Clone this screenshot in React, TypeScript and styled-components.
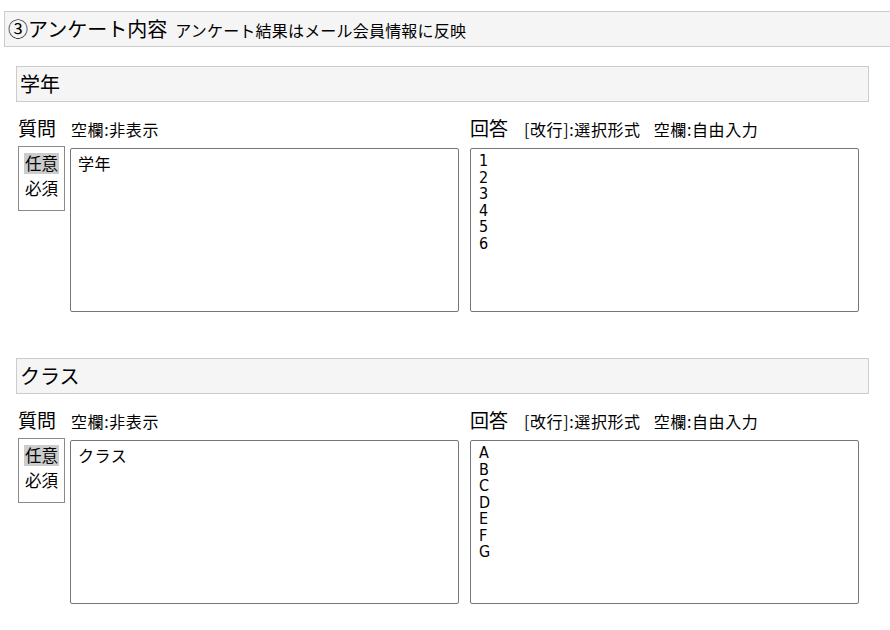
import React from 'react';
import styled, { createGlobalStyle, css } from 'styled-components';

const jp = `"Noto Sans CJK JP", "Noto Sans", sans-serif`;

const GlobalStyle = createGlobalStyle`
  html, body {
    margin: 0;
    padding: 0;
    background: #fff;
    overflow: hidden;
  }
  body {
    font-family: ${jp};
    color: #000;
  }
`;

const barCss = css`
  box-sizing: border-box;
  height: 36px;
  background: #f5f5f5;
  border: 1px solid #cccccc;
  display: flex;
  align-items: center;
  white-space: nowrap;
`;

const Page = styled.div`
  padding-top: 11px;
  width: 890px;
`;

const Header = styled.div`
  ${barCss}
  margin-left: 4px;
  width: 900px;
  padding-left: 3px;
  gap: 8px;
  align-items: baseline;
  padding-top: 2px;
`;

const HeaderTitle = styled.span`
  font-size: 20px;
  line-height: 30px;
`;

const HeaderNote = styled.span`
  font-size: 16px;
  line-height: 30px;
  letter-spacing: 0.2px;
`;

const Sections = styled.div`
  padding: 19px 21px 0 16px;
`;

const Section = styled.section`
  margin-bottom: 46px;
`;

const SectionTitle = styled.div`
  ${barCss}
  padding-left: 3px;
  font-size: 20px;
  line-height: 30px;
`;

const Row = styled.div`
  display: flex;
  gap: 11px;
  padding-left: 2px;
  margin-top: 14px;
`;

const Column = styled.div<{ width: number }>`
  width: ${({ width }) => width}px;
  display: flex;
  flex-direction: column;
`;

const LabelRow = styled.div<{ gap: number }>`
  height: 30px;
  display: flex;
  align-items: baseline;
  gap: ${({ gap }) => gap}px;
  white-space: nowrap;
`;

const Label = styled.span`
  font-size: 19px;
  line-height: 24px;
`;

const Note = styled.span<{ spaced?: boolean }>`
  font-size: 16px;
  line-height: 24px;
  letter-spacing: 0.6px;
  margin-left: ${({ spaced }) => (spaced ? '3px' : '0')};
`;

const Body = styled.div`
  display: flex;
  align-items: flex-start;
  gap: 5px;
`;

const RadioBox = styled.div`
  box-sizing: border-box;
  width: 47px;
  height: 65px;
  border: 1px solid #8a8a8a;
  display: flex;
  flex-direction: column;
  align-items: center;
  padding-top: 6px;
  gap: 4px;
`;

const RadioItem = styled.span<{ selected?: boolean }>`
  font-size: 16.5px;
  line-height: 21px;
  padding: 0 1px;
  background: ${({ selected }) => (selected ? '#cccccc' : 'transparent')};
`;

const Field = styled.textarea<{ list?: boolean }>`
  box-sizing: border-box;
  width: 389px;
  height: 164px;
  margin: 2px 0 0;
  border: 1px solid #767676;
  border-radius: 2px;
  resize: none;
  overflow: hidden;
  outline: none;
  color: #000;
  background: #fff;
  ${({ list }) =>
    list
      ? css`
          padding: 4px 8px;
          font-family: "Liberation Sans Narrow", "DejaVu Sans Condensed", "Liberation Sans", sans-serif;
          font-stretch: condensed;
          font-weight: 300;
          font-size: 16px;
          line-height: 16.5px;
        `
      : css`
          padding: 2px 7px;
          font-family: ${jp};
          font-size: 16px;
          line-height: 24px;
          letter-spacing: 0.5px;
        `}
`;

interface Question {
  title: string;
  question: string;
  answers: string[];
}

const questions: Question[] = [
  { title: '学年', question: '学年', answers: ['1', '2', '3', '4', '5', '6'] },
  { title: 'クラス', question: 'クラス', answers: ['A', 'B', 'C', 'D', 'E', 'F', 'G'] },
];

const QuestionBlock: React.FC<{ item: Question }> = ({ item }) => (
  <Section>
    <SectionTitle>{item.title}</SectionTitle>
    <Row>
      <Column width={441}>
        <LabelRow gap={15}>
          <Label>質問</Label>
          <Note>空欄:非表示</Note>
        </LabelRow>
        <Body>
          <RadioBox>
            <RadioItem selected>任意</RadioItem>
            <RadioItem>必須</RadioItem>
          </RadioBox>
          <Field readOnly defaultValue={item.question} />
        </Body>
      </Column>
      <Column width={389}>
        <LabelRow gap={13}>
          <Label>回答</Label>
          <Note spaced>[改行]:選択形式</Note>
          <Note>空欄:自由入力</Note>
        </LabelRow>
        <Field list readOnly defaultValue={item.answers.join('\n')} />
      </Column>
    </Row>
  </Section>
);

export default function App() {
  return (
    <Page>
      <GlobalStyle />
      <Header>
        <HeaderTitle>③アンケート内容</HeaderTitle>
        <HeaderNote>アンケート結果はメール会員情報に反映</HeaderNote>
      </Header>
      <Sections>
        {questions.map((q) => (
          <QuestionBlock key={q.title} item={q} />
        ))}
      </Sections>
    </Page>
  );
}
